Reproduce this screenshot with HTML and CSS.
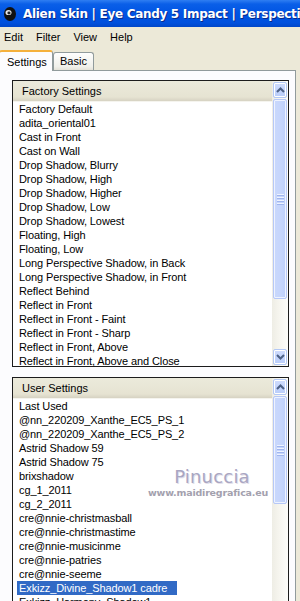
FILE: index.html
```html
<!DOCTYPE html>
<html lang="en">
<head>
  <meta charset="UTF-8" />
  <title>Eye Candy 5 Impact - Perspective Shadow</title>
  <link rel="stylesheet" href="styles.css">
</head>
<body>
  <div class="window">
    <div class="titlebar">
      <svg class="app-icon" width="14" height="16" viewBox="0 0 14 16">
        <ellipse cx="7" cy="8" rx="6" ry="7" fill="#111"/>
        <ellipse cx="5.5" cy="6.5" rx="3" ry="2.6" fill="#e8e8e8"/>
        <ellipse cx="6" cy="7" rx="1.6" ry="1.4" fill="#222"/>
      </svg>
      <span class="title">Alien Skin | Eye Candy 5 Impact | Perspective Shadow</span>
    </div>

    <div class="menubar">
      <span>Edit</span>
      <span>Filter</span>
      <span>View</span>
      <span>Help</span>
    </div>

    <div class="tabs">
      <div class="tab active">Settings</div>
      <div class="tab">Basic</div>
    </div>

    <div class="panel">
      <div class="listbox factory">
        <div class="list-col">
          <div class="list-header">Factory Settings</div>
          <div class="items">
            <div class="item"><span>Factory Default</span></div>
            <div class="item"><span>adita_oriental01</span></div>
            <div class="item"><span>Cast in Front</span></div>
            <div class="item"><span>Cast on Wall</span></div>
            <div class="item"><span>Drop Shadow, Blurry</span></div>
            <div class="item"><span>Drop Shadow, High</span></div>
            <div class="item"><span>Drop Shadow, Higher</span></div>
            <div class="item"><span>Drop Shadow, Low</span></div>
            <div class="item"><span>Drop Shadow, Lowest</span></div>
            <div class="item"><span>Floating, High</span></div>
            <div class="item"><span>Floating, Low</span></div>
            <div class="item"><span>Long Perspective Shadow, in Back</span></div>
            <div class="item"><span>Long Perspective Shadow, in Front</span></div>
            <div class="item"><span>Reflect Behind</span></div>
            <div class="item"><span>Reflect in Front</span></div>
            <div class="item"><span>Reflect in Front - Faint</span></div>
            <div class="item"><span>Reflect in Front - Sharp</span></div>
            <div class="item"><span>Reflect in Front, Above</span></div>
            <div class="item"><span>Reflect in Front, Above and Close</span></div>
          </div>
        </div>
        <div class="scrollbar">
          <div class="sb-btn">
            <svg width="9" height="6" viewBox="0 0 9 6"><path d="M1 5 L4.5 1.5 L8 5" fill="none" stroke="#4d6185" stroke-width="2"/></svg>
          </div>
          <div class="sb-thumb factory-thumb"><i></i><i></i><i></i><i></i></div>
          <div class="sb-track"></div>
          <div class="sb-btn">
            <svg width="9" height="6" viewBox="0 0 9 6"><path d="M1 1 L4.5 4.5 L8 1" fill="none" stroke="#4d6185" stroke-width="2"/></svg>
          </div>
        </div>
      </div>

      <div class="listbox user">
        <div class="list-col">
          <div class="list-header">User Settings</div>
          <div class="items">
            <div class="item"><span>Last Used</span></div>
            <div class="item"><span>@nn_220209_Xanthe_EC5_PS_1</span></div>
            <div class="item"><span>@nn_220209_Xanthe_EC5_PS_2</span></div>
            <div class="item"><span>Astrid Shadow 59</span></div>
            <div class="item"><span>Astrid Shadow 75</span></div>
            <div class="item"><span>brixshadow</span></div>
            <div class="item"><span>cg_1_2011</span></div>
            <div class="item"><span>cg_2_2011</span></div>
            <div class="item"><span>cre@nnie-christmasball</span></div>
            <div class="item"><span>cre@nnie-christmastime</span></div>
            <div class="item"><span>cre@nnie-musicinme</span></div>
            <div class="item"><span>cre@nnie-patries</span></div>
            <div class="item"><span>cre@nnie-seeme</span></div>
            <div class="item selected"><span>Exkizz_Divine_Shadow1 cadre</span></div>
            <div class="item"><span>Exkizz_Harmony_Shadow1</span></div>
          </div>
        </div>
        <div class="scrollbar">
          <div class="sb-btn">
            <svg width="9" height="6" viewBox="0 0 9 6"><path d="M1 5 L4.5 1.5 L8 5" fill="none" stroke="#4d6185" stroke-width="2"/></svg>
          </div>
          <div class="sb-thumb user-thumb"><i></i><i></i><i></i><i></i></div>
          <div class="sb-track"></div>
        </div>
        <div class="watermark">
          <div class="wm-name">Pinuccia</div>
          <div class="wm-url">www.maidiregrafica.eu</div>
        </div>
      </div>
    </div>
  </div>
</body>
</html>
```

FILE: styles.css
```css
body {
  margin: 0;
  width: 300px;
  height: 601px;
  overflow: hidden;
  background: #ece9d8;
  font-family: "Liberation Sans", Arial, sans-serif;
  font-size: 11px;
  color: #000;
}
.window {
  width: 300px;
  height: 601px;
  overflow: hidden;
}
.titlebar {
  height: 27px;
  display: flex;
  align-items: center;
  gap: 6px;
  padding-left: 3px;
  background: linear-gradient(to bottom, #2f7ef2 0%, #0a5fe8 15%, #0054e3 50%, #0050dd 85%, #0046c8 100%);
  white-space: nowrap;
  overflow: hidden;
}
.app-icon {
  flex-shrink: 0;
}
.title {
  color: #fff;
  font-family: "DejaVu Sans", sans-serif;
  font-weight: bold;
  font-size: 12px;
  letter-spacing: -0.3px;
  text-shadow: 1px 1px 0 #0a2a8a;
}
.menubar {
  height: 19px;
  display: flex;
  align-items: center;
  gap: 13px;
  padding-left: 4px;
  background: #ece9d8;
}
.tabs {
  height: 24px;
  display: flex;
  align-items: flex-end;
  position: relative;
  z-index: 1;
}
.tab {
  height: 17px;
  padding: 0 6px;
  line-height: 17px;
  border: 1px solid #919b9c;
  border-bottom: none;
  border-radius: 3px 3px 0 0;
  background: linear-gradient(to bottom, #fefefe, #f0f0ea 80%, #e4e2d8);
}
.tab.active {
  height: 19px;
  line-height: 20px;
  padding: 0 7px;
  margin-left: -1px;
  margin-bottom: -1px;
  border-top: 2px solid #f5b13c;
  background: #fcfcfe;
  width: 38px;
}
.panel {
  height: 600px;
  width: 296px;
  border: 1px solid #919b9c;
  border-left: none;
  background: #fcfcfe;
  padding: 9px 0 0 12px;
  box-sizing: border-box;
  display: flex;
  flex-direction: column;
  gap: 10px;
}
.listbox {
  width: 277px;
  border: 1px solid #1c1c1c;
  background: #fff;
  display: grid;
  grid-template-columns: 1fr 16px;
  overflow: hidden;
  position: relative;
  flex-shrink: 0;
}
.listbox.factory {
  height: 287px;
  box-sizing: border-box;
}
.listbox.user {
  height: 240px;
  box-sizing: border-box;
}
.list-col {
  overflow: hidden;
}
.list-header {
  height: 21px;
  line-height: 21px;
  padding-left: 9px;
  background: linear-gradient(to bottom, #ebeadb, #e6e3d2 80%, #d6d2c2);
  border-bottom: 1px solid #f5f4ee;
  box-sizing: border-box;
}
.items {
  padding-left: 4px;
}
.item {
  height: 14px;
  line-height: 14px;
  white-space: nowrap;
  letter-spacing: -0.1px;
}
.item span {
  padding: 0 2px;
  display: inline-block;
  height: 14px;
}
.item.selected span {
  background: #316ac5;
  color: #fff;
  padding-right: 10px;
}
.scrollbar {
  display: flex;
  flex-direction: column;
  background: linear-gradient(to right, #eeede5, #f7f6f0 50%, #fdfdfa);
}
.sb-btn {
  height: 16px;
  margin: 1px 1px 0 1px;
  border: 1px solid #b3c8f5;
  border-radius: 2px;
  background: linear-gradient(to bottom, #cfdcfd, #b9cdfa);
  box-shadow: inset 0 0 0 1px #fff;
  display: flex;
  align-items: center;
  justify-content: center;
  box-sizing: border-box;
  flex-shrink: 0;
}
.sb-btn:last-child {
  margin: 0 1px 1px 1px;
}
.sb-thumb {
  margin: 1px 1px 0 1px;
  border: 1px solid #b6c8f8;
  border-radius: 2px;
  background: linear-gradient(to right, #c9d8fc, #c5d5fc 60%, #bccffb);
  box-shadow: inset 0 0 0 1px #eef3ff;
  display: flex;
  flex-direction: column;
  align-items: center;
  justify-content: center;
  gap: 1px;
  flex-shrink: 0;
}
.sb-thumb i {
  width: 7px;
  height: 1px;
  background: #eef3ff;
  border-bottom: 1px solid #9fb5ee;
}
.factory-thumb {
  height: 198px;
}
.user-thumb {
  height: 106px;
}
.sb-track {
  flex: 1;
}
.watermark {
  position: absolute;
  left: 133px;
  top: 89px;
  width: 124px;
  text-align: center;
  pointer-events: none;
}
.wm-name {
  font-family: "DejaVu Sans", sans-serif;
  font-size: 18px;
  line-height: 20px;
  color: #a9a6c2;
  letter-spacing: 0.2px;
  padding-left: 8px;
  text-shadow: 1px 1px 0 #e2e0ea;
}
.wm-url {
  font-family: "DejaVu Sans", sans-serif;
  font-size: 9.5px;
  font-weight: bold;
  line-height: 12px;
  color: #a3a1ae;
  letter-spacing: -0.2px;
}
```
